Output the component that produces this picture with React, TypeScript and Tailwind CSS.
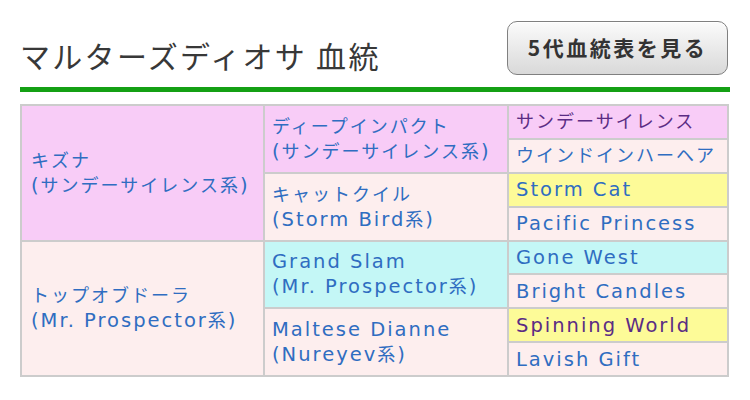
import React from 'react';

type Cell = {
  lines: string[];
  col: 1 | 2 | 3;
  row: number;
  span: number;
  bg: string;
  purple?: boolean;
};

const PINK = 'bg-[#f8ccf7]';
const LIGHT = 'bg-[#fdeeee]';
const YELLOW = 'bg-[#fdfb98]';
const CYAN = 'bg-[#c4f7f6]';

const cells: Cell[] = [
  { lines: ['キズナ', '(サンデーサイレンス系)'], col: 1, row: 1, span: 4, bg: PINK },
  { lines: ['トップオブドーラ', '(Mr. Prospector系)'], col: 1, row: 5, span: 4, bg: LIGHT },
  { lines: ['ディープインパクト', '(サンデーサイレンス系)'], col: 2, row: 1, span: 2, bg: PINK },
  { lines: ['キャットクイル', '(Storm Bird系)'], col: 2, row: 3, span: 2, bg: LIGHT },
  { lines: ['Grand Slam', '(Mr. Prospector系)'], col: 2, row: 5, span: 2, bg: CYAN },
  { lines: ['Maltese Dianne', '(Nureyev系)'], col: 2, row: 7, span: 2, bg: LIGHT },
  { lines: ['サンデーサイレンス'], col: 3, row: 1, span: 1, bg: PINK, purple: true },
  { lines: ['ウインドインハーヘア'], col: 3, row: 2, span: 1, bg: LIGHT },
  { lines: ['Storm Cat'], col: 3, row: 3, span: 1, bg: YELLOW },
  { lines: ['Pacific Princess'], col: 3, row: 4, span: 1, bg: LIGHT },
  { lines: ['Gone West'], col: 3, row: 5, span: 1, bg: CYAN },
  { lines: ['Bright Candles'], col: 3, row: 6, span: 1, bg: LIGHT },
  { lines: ['Spinning World'], col: 3, row: 7, span: 1, bg: YELLOW, purple: true },
  { lines: ['Lavish Gift'], col: 3, row: 8, span: 1, bg: LIGHT },
];

const colClass = { 1: 'col-start-1 pl-[9px]', 2: 'col-start-2 pl-[7px]', 3: 'col-start-3 pl-[7px]' };

const rowClass: Record<number, string> = {
  1: 'row-start-1',
  2: 'row-start-2',
  3: 'row-start-3',
  4: 'row-start-4',
  5: 'row-start-5',
  6: 'row-start-6',
  7: 'row-start-7',
  8: 'row-start-8',
};

const spanClass: Record<number, string> = {
  1: 'row-span-1',
  2: 'row-span-2',
  4: 'row-span-4',
};

// latin glyphs in the original font run wider than the kana, so give them a bit more size
function Line({ text }: { text: string }) {
  const parts = text.match(/[\u3000-\u9fff\u30a0-\u30ff]+|[^\u3000-\u9fff\u30a0-\u30ff]+/g) ?? [];
  return (
    <div className="whitespace-nowrap">
      {parts.map((p, i) =>
        /[\u3000-\u9fff]/.test(p) ? (
          <span key={i}>{p}</span>
        ) : (
          <span key={i} className="text-[19.5px]">
            {p}
          </span>
        ),
      )}
    </div>
  );
}

export default function App() {
  return (
    <div className="w-[750px] h-[400px] bg-white font-['DejaVu_Sans','Noto_Sans_CJK_JP',sans-serif]">
      {/* header */}
      <div className="flex items-start justify-between pl-[20px] pr-[22px] pt-[21px]">
        <h1 className="mt-[16px] text-[30px] leading-[36px] tracking-[2.3px] text-[#383838] font-['Noto_Sans_CJK_JP',sans-serif] font-normal">
          マルターズディオサ 血統
        </h1>
        <button className="w-[221px] h-[54px] rounded-[10px] border-[1.5px] border-[#808080] bg-gradient-to-b from-[#fbfbfb] to-[#d9d9d9] text-[21px] font-bold tracking-[2.5px] text-[#333333] font-['Noto_Sans_CJK_JP',sans-serif] shadow-[inset_0_1px_0_#ffffff]">
          5代血統表を見る
        </button>
      </div>

      <div className="mx-[20px] mt-[12px] h-[5px] bg-[#14a014]" />

      {/* pedigree table */}
      <div className="mx-[20px] mt-[12px] w-[709px] h-[273px] grid grid-cols-[241px_242px_1fr] grid-rows-8 gap-[2px] p-[2px] bg-[#cccccc]">
        {cells.map((c, i) => (
          <div
            key={i}
            className={`${colClass[c.col]} ${rowClass[c.row]} ${spanClass[c.span]} ${c.bg} flex flex-col justify-center text-[18px] leading-[25px] tracking-[2px] ${
              c.purple ? 'text-[#5b2c84]' : 'text-[#2f6dc1]'
            }`}
          >
            {c.lines.map((l) => (
              <Line key={l} text={l} />
            ))}
          </div>
        ))}
      </div>
    </div>
  );
}
